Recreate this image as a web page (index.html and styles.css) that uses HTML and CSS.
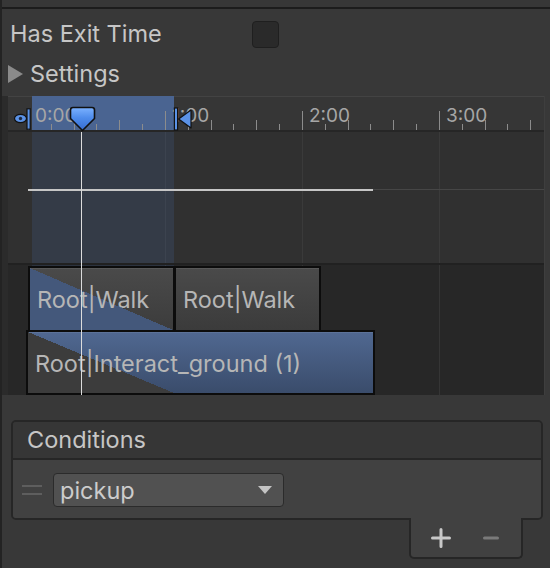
FILE: index.html
```html
<!DOCTYPE html>
<html>
<head>
<meta charset="utf-8">
<link rel="stylesheet" href="styles.css">
</head>
<body>
<div class="panel">
  <div class="topband"></div>
  <div class="row exit"><span class="label">Has Exit Time</span><span class="checkbox"></span></div>
  <div class="row settings"><span class="tri"></span><span class="label">Settings</span></div>

  <div class="timeline">
    <div class="tl-gutter"></div>
    <div class="tl">
      <div class="ruler">
        <div class="sel-top"></div>
        <div class="ticks">
          <span class="t maj"></span><span class="t"></span><span class="t tall"></span><span class="t"></span><span class="t tall"></span><span class="t"></span>
          <span class="t maj"></span><span class="t"></span><span class="t tall"></span><span class="t"></span><span class="t tall"></span><span class="t"></span>
          <span class="t maj"></span><span class="t"></span><span class="t tall"></span><span class="t"></span><span class="t tall"></span><span class="t"></span>
          <span class="t maj"></span><span class="t"></span><span class="t tall"></span><span class="t"></span><span class="t tall"></span>
        </div>
        <div class="labels">
          <span class="lbl">0:00</span><span class="lbl">1:00</span><span class="lbl">2:00</span><span class="lbl">3:00</span>
        </div>
        <svg class="mk-left" width="19" height="22" viewBox="0 0 19 22">
          <ellipse cx="7.5" cy="10.5" rx="6" ry="4.2" fill="#5b92e6" stroke="#121212" stroke-width="1.2"/>
          <circle cx="7.5" cy="10.5" r="1.7" fill="#1d2a44"/>
          <rect x="14" y="0.8" width="3.2" height="20.4" fill="#5b92e6" stroke="#121212" stroke-width="1.2"/>
        </svg>
        <svg class="mk-right" width="20" height="24" viewBox="0 0 20 24">
          <rect x="1.4" y="1" width="3.2" height="22" fill="#5b92e6" stroke="#121212" stroke-width="1.2"/>
          <path d="M5.6 12 L18 3 L18 21 Z" fill="#5b92e6" stroke="#121212" stroke-width="1.2" stroke-linejoin="round"/>
        </svg>
        <svg class="handle" width="27" height="26" viewBox="0 0 27 26">
          <defs>
            <linearGradient id="hg" x1="0" y1="0" x2="0" y2="1">
              <stop offset="0" stop-color="#7cb2ff"/>
              <stop offset="0.45" stop-color="#4e8cec"/>
              <stop offset="1" stop-color="#356bd0"/>
            </linearGradient>
          </defs>
          <path d="M4 1.5 H23 Q25.5 1.5 25.5 4 V12.5 L13.5 24.5 L1.5 12.5 V4 Q1.5 1.5 4 1.5 Z" fill="url(#hg)" stroke="#111" stroke-width="1.6" stroke-linejoin="round"/>
        </svg>
      </div>
      <div class="curve">
        <div class="sel-low"></div>
        <div class="curve-line"></div>
        <div class="curve-rest"></div>
      </div>
      <div class="clips">
        <div class="sel-low"></div>
        <div class="clip c1"><span class="ctext">Root|Walk</span></div>
        <div class="clip c2"><span class="ctext">Root|Walk</span></div>
        <div class="clip c3"><span class="fade"></span><span class="ctext">Root|Interact_ground (1)</span></div>
      </div>
      <div class="scrub"></div>
    </div>
  </div>

  <div class="cond">
    <div class="cond-head">Conditions</div>
    <div class="cond-body">
      <span class="drag"></span>
      <div class="dropdown"><span class="dd-text">pickup</span><span class="arrow"></span></div>
    </div>
  </div>
  <div class="foot-row">
    <div class="foot">
      <svg width="20" height="20" viewBox="0 0 20 20"><path d="M10 1.5v17M1.5 10h17" stroke="#c8c8c8" stroke-width="3" stroke-linecap="round"/></svg>
      <svg width="16" height="4" viewBox="0 0 16 4"><path d="M1.5 2h13" stroke="#7a7a7a" stroke-width="3" stroke-linecap="round"/></svg>
    </div>
  </div>
</div>
</body>
</html>
```
FILE: styles.css
```css
* { box-sizing: border-box; }
body {
  margin: 0;
  background: #383838;
  font-family: Inter, "Noto Sans", sans-serif;
}
.panel {
  width: 550px;
  height: 568px;
  overflow: hidden;
  background: #383838;
  border-left: 2px solid #232323;
  display: flex;
  flex-direction: column;
}
.topband {
  height: 9px;
  flex: none;
  background: #373737;
  border-bottom: 2px solid #1c1c1c;
}
.row {
  height: 40px;
  flex: none;
  display: flex;
  align-items: center;
  font-size: 23.5px;
  line-height: 40px;
  color: #c6c6c6;
}
.exit { margin-top: 5px; padding-left: 8px; }
.exit .label { width: 242px; }
.checkbox {
  width: 27px;
  height: 27px;
  border-radius: 4px;
  background: #2a2a2a;
  border: 1px solid #1f1f1f;
}
.settings { padding-left: 6px; }
.tri {
  width: 0;
  height: 0;
  border-left: 15px solid #8a8a8a;
  border-top: 9px solid transparent;
  border-bottom: 9px solid transparent;
  margin-right: 7px;
}

/* timeline */
.timeline {
  margin-top: 2px;
  height: 299px;
  flex: none;
  display: flex;
}
.tl-gutter { width: 6px; background: #2b2b2b; }
.tl {
  position: relative;
  width: 537px;
  display: flex;
  flex-direction: column;
  border-right: 1px solid #3e3e3e;
}
.ruler {
  position: relative;
  height: 36px;
  flex: none;
  background: #363636;
  border-top: 1px solid #434343;
  border-bottom: 2px solid #262626;
}
.sel-top {
  position: absolute;
  left: 24px;
  width: 142px;
  top: -1px;
  bottom: 0;
  background: #4a6491;
}
.ticks {
  position: absolute;
  left: 20px;
  right: 0;
  bottom: 0;
  display: flex;
  align-items: flex-end;
}
.t {
  flex: 0 0 22.833px;
  height: 6px;
  border-left: 1px solid #8c8c8c;
}
.t.tall { height: 10px; }
.t.maj { height: 19px; }
.labels {
  position: absolute;
  left: 20px;
  top: 9px;
  display: flex;
  font-size: 19px;
  line-height: 19px;
  color: #a6a6a6;
}
.lbl { flex: 0 0 137px; padding-left: 7px; }
.mk-left { position: absolute; left: 5px; top: 11px; }
.mk-right { position: absolute; left: 165px; top: 10px; }
.handle { position: absolute; left: 61px; top: 9px; z-index: 6; }

.curve {
  position: relative;
  height: 131px;
  flex: none;
  background:
    linear-gradient(#3a3a3a, #3a3a3a) 157px 0 / 1px 100% no-repeat,
    linear-gradient(#3a3a3a, #3a3a3a) 294px 0 / 1px 100% no-repeat,
    linear-gradient(#3a3a3a, #3a3a3a) 431px 0 / 1px 100% no-repeat,
    #303030;
}
.sel-low {
  position: absolute;
  left: 24px;
  width: 142px;
  top: 0;
  bottom: 0;
  background: rgba(70, 110, 180, 0.18);
}
.curve-line {
  position: absolute;
  left: 20px;
  width: 345px;
  top: 57px;
  height: 2px;
  background: #c6c6c6;
}
.curve-rest {
  position: absolute;
  left: 365px;
  right: 0;
  top: 57px;
  height: 1px;
  background: #464646;
}
.clips {
  position: relative;
  flex: 1;
  border-top: 2px solid #212121;
  background:
    linear-gradient(#353535, #353535) 157px 0 / 1px 100% no-repeat,
    linear-gradient(#353535, #353535) 294px 0 / 1px 100% no-repeat,
    linear-gradient(#353535, #353535) 431px 0 / 1px 100% no-repeat,
    #272727;
}
.clip {
  position: absolute;
  border: 2px solid #0c0c0c;
  font-size: 23.5px;
  color: #b6b6b6;
  padding-left: 7px;
  display: flex;
  align-items: center;
  white-space: nowrap;
  overflow: hidden;
  box-shadow: inset 0 1px 0 rgba(255, 255, 255, 0.08);
}
.ctext { position: relative; }
.c1 {
  left: 20px;
  top: 1px;
  width: 147px;
  height: 66px;
  background:
    linear-gradient(to top right, #44587b 50%, transparent 50%),
    linear-gradient(#4a4a4a, #3c3c3c);
}
.c2 {
  left: 166px;
  top: 1px;
  width: 147px;
  height: 66px;
  background: linear-gradient(#4a4a4a, #3b3b3b);
}
.c3 {
  left: 18px;
  top: 65px;
  width: 349px;
  height: 65px;
  padding-top: 2px;
  background: linear-gradient(#506891, #3a4c6b);
}
.fade {
  position: absolute;
  left: 0;
  top: 0;
  bottom: 0;
  width: 146px;
  background: linear-gradient(to top right, #3c3c3c 50%, transparent 50%);
}
.scrub {
  position: absolute;
  left: 73px;
  top: 36px;
  bottom: 0;
  width: 1px;
  background: #dcdcdc;
  z-index: 5;
}

/* conditions */
.cond {
  margin: 25px 0 0 9px;
  width: 532px;
  flex: none;
  border: 2px solid #262626;
  border-radius: 5px;
  overflow: hidden;
}
.cond-head {
  height: 38px;
  background: #363636;
  border-bottom: 2px solid #262626;
  padding-left: 14px;
  font-size: 23.5px;
  line-height: 36px;
  color: #c6c6c6;
}
.cond-body {
  height: 58px;
  background: #414141;
  display: flex;
  align-items: center;
  padding-left: 9px;
  padding-top: 2px;
}
.drag {
  width: 20px;
  height: 10px;
  border-top: 2px solid #5e5e5e;
  border-bottom: 2px solid #5e5e5e;
  margin-right: 11px;
}
.dropdown {
  width: 231px;
  height: 34px;
  background: #515151;
  border: 1px solid #2b2b2b;
  border-radius: 4px;
  display: flex;
  align-items: center;
  justify-content: space-between;
  padding: 0 11px 0 6px;
  font-size: 23.5px;
  color: #cccccc;
}
.arrow {
  width: 0;
  height: 0;
  border-top: 8px solid #c4c4c4;
  border-left: 7px solid transparent;
  border-right: 7px solid transparent;
}
.foot-row {
  display: flex;
  justify-content: flex-end;
  padding-right: 27px;
  margin-top: -2px;
  flex: none;
}
.foot {
  position: relative;
  width: 114px;
  height: 41px;
  background: #414141;
  border: 2px solid #262626;
  border-top: none;
  border-radius: 0 0 5px 5px;
  display: flex;
  align-items: center;
  gap: 32px;
  padding-left: 20px;
}
```
